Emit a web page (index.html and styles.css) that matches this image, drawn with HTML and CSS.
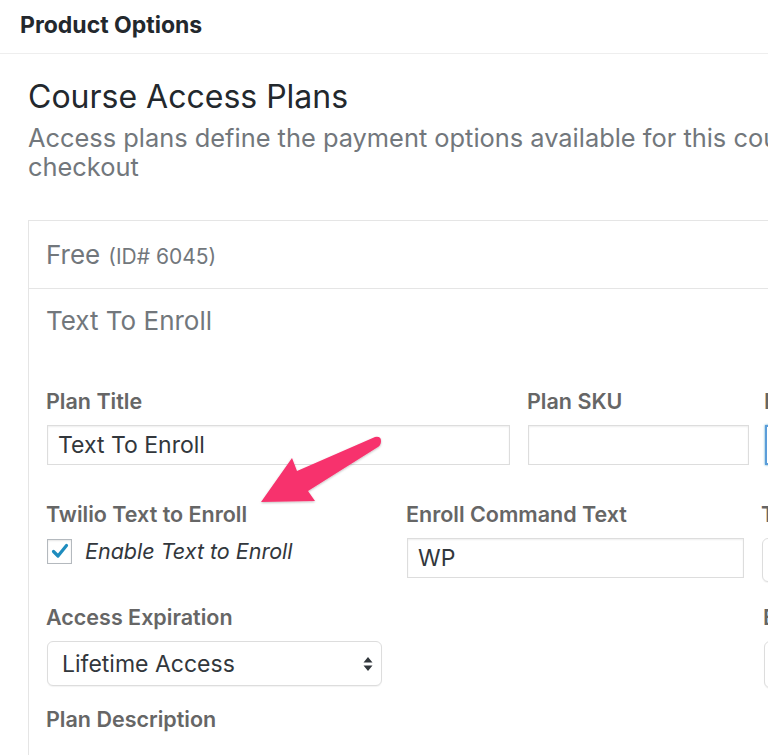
FILE: index.html
```html
<!DOCTYPE html>
<html lang="en">
<head>
<meta charset="utf-8">
<title>Product Options</title>
<link rel="stylesheet" href="styles.css">
</head>
<body>
<div class="page">
  <div class="postbox-header">
    <h2 class="postbox-title">Product Options</h2>
  </div>
  <div class="inside">
    <h1 class="title">Course Access Plans</h1>
    <p class="desc"><span class="desc-line">Access plans define the payment options available for this course and will be displayed during</span>checkout</p>

    <div class="plan-box">
      <div class="plan-head">Free <span class="plan-id">(ID# 6045)</span></div>
      <div class="plan-body">
        <div class="plan-name">Text To Enroll</div>

        <div class="row row-1">
          <div class="field w-title">
            <div class="label">Plan Title</div>
            <input class="input" type="text" value="Text To Enroll">
          </div>
          <div class="field w-sku">
            <div class="label">Plan SKU</div>
            <input class="input" type="text" value="">
          </div>
          <div class="field w-third">
            <div class="label">Enroll Button Text</div>
            <input class="input input-focus" type="text" value="">
          </div>
        </div>

        <div class="row row-2">
          <div class="field w-twilio">
            <div class="label">Twilio Text to Enroll</div>
            <div class="check-line">
              <span class="checkbox">
                <svg width="20" height="20" viewBox="0 0 20 20"><path d="M3.5 10.5 L8 15 L16.5 4.5" fill="none" stroke="#1e8cbe" stroke-width="3.2" stroke-linecap="round" stroke-linejoin="round"/></svg>
              </span>
              <span class="check-text">Enable Text to Enroll</span>
            </div>
          </div>
          <div class="field w-command">
            <div class="label">Enroll Command Text</div>
            <input class="input" type="text" value="WP">
          </div>
          <div class="field w-third2">
            <div class="label">Twilio Phone Number</div>
            <div class="select select-tall"><span>&nbsp;</span></div>
          </div>
        </div>

        <div class="row row-3">
          <div class="field w-expire">
            <div class="label">Access Expiration</div>
            <div class="select">
              <span>Lifetime Access</span>
              <svg class="updown" width="10" height="16" viewBox="0 0 10 16"><path d="M5 1 L9.5 6.5 L0.5 6.5 Z M5 15 L9.5 9.5 L0.5 9.5 Z" fill="#32373c"/></svg>
            </div>
          </div>
          <div class="field w-third3">
            <div class="label">Enrollment Redirect</div>
            <div class="select select-tall2"><span>&nbsp;</span></div>
          </div>
        </div>

        <div class="label">Plan Description</div>
      </div>
    </div>
  </div>

  <svg class="callout" width="140" height="84" viewBox="0 0 140 84">
    <defs>
      <filter id="sh" x="-10%" y="-10%" width="130%" height="130%">
        <feDropShadow dx="0" dy="1" stdDeviation="1" flood-color="#000" flood-opacity="0.25"/>
      </filter>
    </defs>
    <path d="M11 72 L42 28 L47 41 L125 7 Q131 6 131 11 Q131 15 128 17 L58 61 L65 71 Z" fill="#f7336d" filter="url(#sh)"/>
  </svg>
</div>
</body>
</html>
```

FILE: styles.css
```css
html, body {
  margin: 0;
  padding: 0;
  background: #ffffff;
  overflow: hidden;
}

body {
  font-family: "Inter", "Roboto", "Liberation Sans", sans-serif;
  color: #23282d;
}

.page {
  position: relative;
  width: 1200px;
}

.postbox-header {
  height: 54px;
  box-sizing: border-box;
  border-bottom: 1px solid #eeeeee;
  padding: 0 0 4px 20px;
  display: flex;
  align-items: center;
}

.postbox-title {
  margin: 0;
  font-size: 23px;
  font-weight: 700;
  line-height: 26px;
  color: #23282d;
}

.inside {
  padding: 0 28px;
}

.title {
  margin: 21px 0 0;
  font-size: 32px;
  font-weight: 400;
  line-height: 44px;
  color: #23282d;
}

.desc {
  margin: 4px 0 0;
  font-size: 25.4px;
  line-height: 29px;
  color: #72777c;
}

.desc-line {
  display: block;
  white-space: nowrap;
}

.plan-box {
  margin-top: 39px;
  border: 1px solid #e5e5e5;
}

.plan-head {
  height: 67px;
  border-bottom: 1px solid #e5e5e5;
  padding-left: 17px;
  display: flex;
  align-items: center;
  font-size: 26px;
  color: #72777c;
}

.plan-id {
  font-size: 21px;
  margin-left: 8px;
  padding-top: 3px;
}

.plan-body {
  padding: 17px 17px 40px;
}

.plan-name {
  font-size: 26px;
  line-height: 30px;
  color: #72777c;
  margin-bottom: 53px;
}

.row {
  display: flex;
}

.row-1 { margin-bottom: 37px; }
.row-2 { margin-bottom: 23px; }
.row-3 { margin-bottom: 19px; }

.label {
  font-size: 21.5px;
  font-weight: 600;
  line-height: 24px;
  color: #666666;
  margin-bottom: 12px;
  white-space: nowrap;
}

.w-title { width: 463px; margin-right: 18px; }
.w-sku { width: 221px; margin-right: 16px; }
.w-third { width: 320px; }

.w-twilio { width: 360px; }
.w-command { width: 337px; margin-right: 18px; }
.w-third2 { width: 320px; }

.w-expire { width: 336px; margin-right: 381px; }
.w-third3 { width: 320px; }

.input {
  display: block;
  width: 100%;
  height: 40px;
  box-sizing: border-box;
  margin: 0 0 0 1px;
  border: 1px solid #dddddd;
  box-shadow: inset 0 1px 2px rgba(0, 0, 0, 0.07);
  padding: 0 10px;
  font-family: inherit;
  font-size: 23px;
  color: #32373c;
  background: #ffffff;
  outline: none;
}

.input-focus {
  border: 2px solid #5b9dd9;
  box-shadow: 0 0 2px rgba(30, 140, 190, 0.8);
}

.check-line {
  display: flex;
  align-items: center;
}

.checkbox {
  width: 25px;
  height: 25px;
  box-sizing: border-box;
  margin-left: 1px;
  border: 1px solid #b4b9be;
  box-shadow: inset 0 1px 2px rgba(0, 0, 0, 0.1);
  display: flex;
  align-items: center;
  justify-content: center;
  background: #ffffff;
}

.check-text {
  margin-left: 13px;
  font-size: 21.5px;
  font-style: italic;
  color: #32373c;
}

.select {
  margin-left: 1px;
  height: 45px;
  box-sizing: border-box;
  border: 1px solid #dddddd;
  border-radius: 6px;
  box-shadow: 0 1px 1px rgba(0, 0, 0, 0.05);
  padding: 0 8px 0 14px;
  display: flex;
  align-items: center;
  justify-content: space-between;
  font-size: 23px;
  color: #32373c;
  background: #ffffff;
}

.select-tall { height: 44px; }
.select-tall2 { height: 47px; margin-top: 3px; }

.updown { display: block; }

.callout {
  position: absolute;
  left: 250px;
  top: 430px;
}
```
